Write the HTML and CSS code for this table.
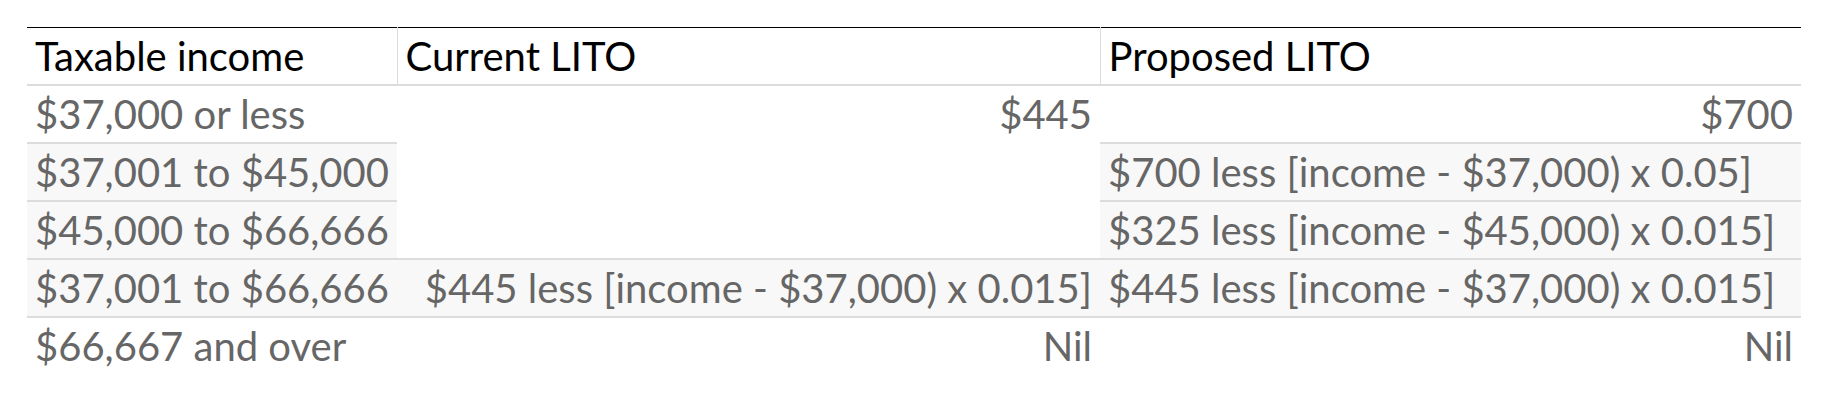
FILE: index.html
```html
<!DOCTYPE html>
<html>
<head>
<meta charset="utf-8">
<link rel="stylesheet" href="styles.css">
</head>
<body>
<div class="page">
  <table class="lito">
    <colgroup>
      <col class="c1">
      <col class="c2">
      <col class="c3">
    </colgroup>
    <thead>
      <tr>
        <th>Taxable income</th>
        <th>Current LITO</th>
        <th>Proposed LITO</th>
      </tr>
    </thead>
    <tbody>
      <tr>
        <td>$37,000 or less</td>
        <td class="r span" rowspan="3">$445</td>
        <td class="r">$700</td>
      </tr>
      <tr class="alt">
        <td>$37,001 to $45,000</td>
        <td>$700 less [income - $37,000) x 0.05]</td>
      </tr>
      <tr class="alt">
        <td>$45,000 to $66,666</td>
        <td>$325 less [income - $45,000) x 0.015]</td>
      </tr>
      <tr class="alt">
        <td>$37,001 to $66,666</td>
        <td class="r">$445 less [income - $37,000) x 0.015]</td>
        <td>$445 less [income - $37,000) x 0.015]</td>
      </tr>
      <tr class="last">
        <td>$66,667 and over</td>
        <td class="r">Nil</td>
        <td class="r">Nil</td>
      </tr>
    </tbody>
  </table>
</div>
</body>
</html>
```

FILE: styles.css
```css
html, body {
  margin: 0;
  padding: 0;
  background: #ffffff;
}

.page {
  padding: 27px 27px 0 27px;
}

.lito {
  width: 1774px;
  border-collapse: collapse;
  table-layout: fixed;
  font-family: Lato, "Open Sans", sans-serif;
  font-size: 40px;
  border-top: 1px solid #000;
}

.c1 { width: 370px; }
.c2 { width: 703px; }
.c3 { width: 701px; }

.lito th,
.lito td {
  height: 58px;
  padding: 6px 8px 0 8px;
  box-sizing: border-box;
  vertical-align: top;
  text-align: left;
  white-space: nowrap;
  line-height: 44px;
}

.lito th {
  font-weight: normal;
  color: #000;
  border-bottom: 2px solid #dcdcdc;
  border-left: 1px solid #dcdcdc;
  height: 57px;
}

.lito th:first-child {
  border-left: none;
}

.lito td {
  color: #666666;
  border-bottom: 2px solid #dcdcdc;
}

.lito .alt td {
  background: #f8f8f8;
}

.lito td.span {
  background: #ffffff;
}

.lito .last td {
  border-bottom: none;
}

.lito .r {
  text-align: right;
}
```
